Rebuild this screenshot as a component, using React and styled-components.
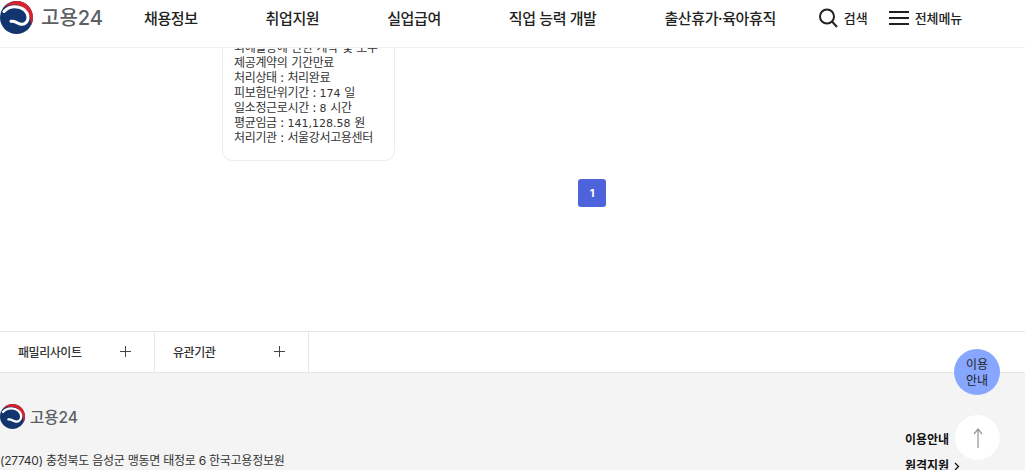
import styled, { createGlobalStyle } from 'styled-components';

const GlobalStyle = createGlobalStyle`
  html, body {
    margin: 0;
    height: 100%;
    overflow: hidden;
    background: #fff;
  }
  * {
    box-sizing: border-box;
  }
  body {
    font-family: Inter, 'Noto Sans CJK KR', sans-serif;
    color: #222;
  }
`;

const Page = styled.div`
  width: 1025px;
  height: 470px;
  overflow: hidden;
  position: relative;
  display: flex;
  flex-direction: column;
`;

const Header = styled.header`
  height: 48px;
  flex: none;
  display: flex;
  align-items: center;
  padding-bottom: 12px;
  background: #fff;
  border-bottom: 1px solid #f0f0f0;
  position: relative;
  z-index: 2;
`;

const LogoWrap = styled.div`
  display: flex;
  align-items: center;
  gap: ${(p) => (p.$small ? '5px' : '8px')};
  width: ${(p) => (p.$small ? 'auto' : '144px')};
`;

const LogoText = styled.span`
  font-size: ${(p) => (p.$small ? '15.5px' : '20px')};
  font-weight: 500;
  color: #5c5f63;
  position: relative;
  top: -1px;
`;

const Nav = styled.nav`
  display: flex;
  align-items: center;
`;

const NavItem = styled.a`
  font-size: 15px;
  font-weight: 500;
  letter-spacing: -0.4px;
  color: #222;
  margin-right: ${(p) => p.$gap}px;
  white-space: nowrap;
`;

const Tools = styled.div`
  display: flex;
  align-items: center;
  margin-left: 43px;
`;

const Tool = styled.a`
  display: flex;
  align-items: center;
  gap: 6px;
  font-size: 13px;
  font-weight: 500;
  letter-spacing: -0.05px;
  color: #222;
  margin-right: 21px;
  white-space: nowrap;
`;

const Main = styled.main`
  height: 283px;
  flex: none;
  overflow: hidden;
  display: flex;
  flex-direction: column;
`;

const Card = styled.article`
  width: 173px;
  height: 142px;
  margin: -29px 0 0 222px;
  padding: 19px 0 0 11px;
  border: 1px solid #ececec;
  border-radius: 10px;
  font-family: 'Noto Sans CJK KR', sans-serif;
  font-size: 12px;
  line-height: 15px;
  letter-spacing: -0.35px;
  word-spacing: 1.5px;
  color: #333;
  background: #fff;
  white-space: nowrap;
`;

const Num = styled.span`
  font-family: 'DejaVu Sans', sans-serif;
  font-size: 11px;
  line-height: 0;
  letter-spacing: 0;
`;

const Pagination = styled.div`
  display: flex;
  justify-content: center;
  margin: 18px 0 0 159px;
`;

const PageButton = styled.button`
  width: 28px;
  height: 28px;
  border: 0;
  border-radius: 3px;
  background: #4c63dc;
  color: #fff;
  font: 700 11px Inter, sans-serif;
`;

const SiteBar = styled.div`
  height: 42px;
  flex: none;
  display: flex;
  border-top: 1px solid #e6e6e6;
  border-bottom: 1px solid #e6e6e6;
  background: #fff;
`;

const SiteSelect = styled.div`
  width: ${(p) => p.$width}px;
  display: flex;
  align-items: center;
  justify-content: space-between;
  padding: 0 23px 2px 18px;
  border-right: 1px solid #e6e6e6;
  font-size: 12px;
  font-weight: 500;
  letter-spacing: -0.45px;
  color: #333;
`;

const Footer = styled.footer`
  flex: 1;
  background: #f4f4f4;
  padding-top: 31px;
  display: flex;
  flex-direction: column;
  align-items: flex-start;
`;

const Address = styled.p`
  margin: 23px 0 0;
  font-size: 12px;
  letter-spacing: -0.25px;
  line-height: 18px;
  color: #333;
  white-space: nowrap;
`;

const FooterLinks = styled.div`
  position: absolute;
  left: 905px;
  top: 431px;
  font-size: 12px;
  font-weight: 600;
  color: #111;
  line-height: 18px;
`;

const FooterLink = styled.div`
  display: flex;
  align-items: center;
  gap: 5px;
  margin-bottom: 8px;
  white-space: nowrap;
`;

const GuideBubble = styled.button`
  position: absolute;
  left: 954px;
  top: 349px;
  width: 46px;
  height: 46px;
  border: 0;
  border-radius: 50%;
  padding: 2px 0 0;
  background: #86a6ff;
  color: #222;
  font: 400 12px/16px Inter, 'Noto Sans CJK KR', sans-serif;
`;

const TopButton = styled.button`
  position: absolute;
  left: 955px;
  top: 415px;
  width: 45px;
  height: 45px;
  border: 0;
  border-radius: 50%;
  padding: 0;
  background: #fff;
  display: flex;
  align-items: center;
  justify-content: center;
`;

const Emblem = ({ size }) => (
  <svg width={size} height={size} viewBox="0 0 33 33">
    <circle cx="16.500" cy="16.500" r="16.500" fill="#12356f" />
    <path
      d="M4 6.500C7.500 2.300 12 0 16.500 0 26 0 33 7.500 33 16.500c0 3-.7 5.500-2 8C31.500 13 24 3.500 14.500 3.700 10.500 3.800 7 4.800 4 6.500Z"
      fill="#d8232f"
    />
    <path
      d="M4 10.500C7 7 10.500 5.700 15 5.700c7.500 0 13 5 13 10.800 0 5-4 7.500-8 6.500-4-1-5-3.500-9-2.700"
      fill="none"
      stroke="#fff"
      strokeWidth="3"
      strokeLinecap="round"
    />
  </svg>
);

const Logo = ({ small }) => (
  <LogoWrap $small={small}>
    <Emblem size={small ? 25 : 33} />
    <LogoText $small={small}>고용24</LogoText>
  </LogoWrap>
);

const Plus = () => (
  <svg width="11" height="11" viewBox="0 0 11 11">
    <path d="M5.500 0v11M0 5.500h11" stroke="#444" strokeWidth="1" />
  </svg>
);

const navItems = [
  ['채용정보', 68],
  ['취업지원', 68],
  ['실업급여', 68],
  ['직업 능력 개발', 68],
  ['출산휴가·육아휴직', 0],
];

export default function App() {
  return (
    <Page>
      <GlobalStyle />
      <Header>
        <Logo />
        <Nav>
          {navItems.map(([label, gap]) => (
            <NavItem key={label} $gap={gap}>{label}</NavItem>
          ))}
        </Nav>
        <Tools>
          <Tool>
            <svg width="19" height="20" viewBox="0 0 19 20" fill="none" stroke="#222" strokeWidth="2">
              <circle cx="8" cy="8.500" r="7" />
              <path d="M13 13.500 18 19" />
            </svg>
            검색
          </Tool>
          <Tool>
            <svg width="20" height="16" viewBox="0 0 20 16" stroke="#222" strokeWidth="2">
              <path d="M0 2h20M0 8h20M0 14h20" />
            </svg>
            전체메뉴
          </Tool>
        </Tools>
      </Header>
      <Main>
        <Card>
          <div>외에활동에 관한 계약 및 보수</div>
          <div>제공계약의 기간만료</div>
          <div>처리상태 : 처리완료</div>
          <div>피보험단위기간 : <Num>174</Num> 일</div>
          <div>일소정근로시간 : <Num>8</Num> 시간</div>
          <div>평균임금 : <Num>141,128.58</Num> 원</div>
          <div>처리기관 : 서울강서고용센터</div>
        </Card>
        <Pagination>
          <PageButton>1</PageButton>
        </Pagination>
      </Main>
      <SiteBar>
        <SiteSelect $width={155}>패밀리사이트 <Plus /></SiteSelect>
        <SiteSelect $width={154}>유관기관 <Plus /></SiteSelect>
      </SiteBar>
      <Footer>
        <Logo small />
        <Address>(27740) 충청북도 음성군 맹동면 태정로 6 한국고용정보원</Address>
      </Footer>
      <FooterLinks>
        <FooterLink>이용안내</FooterLink>
        <FooterLink>
          원격지원
          <svg width="6" height="9" viewBox="0 0 6 9" fill="none" stroke="#111" strokeWidth="1.300">
            <path d="M1 1l3.500 3.500L1 8" />
          </svg>
        </FooterLink>
      </FooterLinks>
      <GuideBubble>이용<br />안내</GuideBubble>
      <TopButton>
        <svg width="10" height="20" viewBox="0 0 10 20" fill="none" stroke="#9a9a9a" strokeWidth="1.300">
          <path d="M5 20V1M1 6l4-5 4 5" />
        </svg>
      </TopButton>
    </Page>
  );
}
